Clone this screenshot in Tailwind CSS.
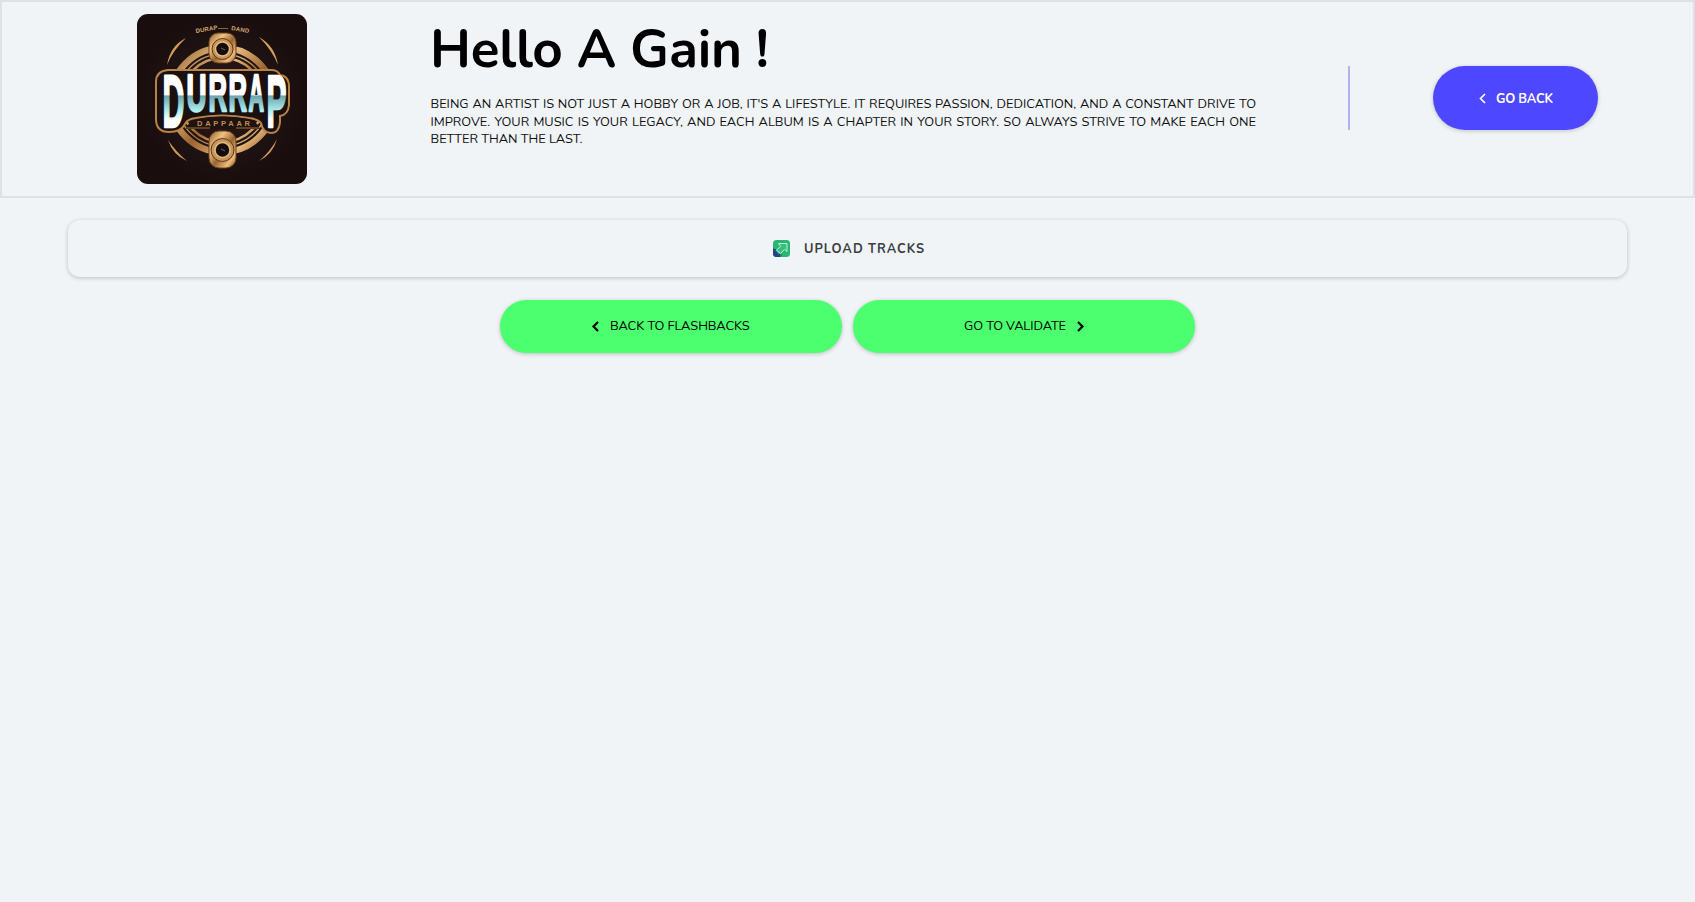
<!DOCTYPE html>
<html lang="en">
<head>
<meta charset="utf-8">
<title>Upload Tracks</title>
<script src="https://cdn.jsdelivr.net/npm/@tailwindcss/browser@4"></script>
</head>
<body class="min-h-screen bg-[#f0f4f7] font-[Nunito,Lato,sans-serif] text-black">
<header class="flex h-[198px] items-start border-2 border-[#dee2e6] pt-3 pl-[135px]">
  <svg class="size-[170px] shrink-0 rounded-[11px]" viewBox="0 0 170 170">
    <defs>
      <radialGradient id="bg"><stop offset="0" stop-color="#2a1b1b"/><stop offset="1" stop-color="#190d0e"/></radialGradient>
      <linearGradient id="gold" x1="0" y1="0" x2="1" y2="1"><stop offset="0" stop-color="#8a5a2c"/><stop offset=".3" stop-color="#f0c382"/><stop offset=".55" stop-color="#9a6430"/><stop offset=".8" stop-color="#eebd7c"/><stop offset="1" stop-color="#70421f"/></linearGradient>
      <linearGradient id="chrome" gradientUnits="userSpaceOnUse" x1="0" y1="60" x2="0" y2="114"><stop offset="0" stop-color="#fff"/><stop offset=".38" stop-color="#fff"/><stop offset=".41" stop-color="#6fa5ae"/><stop offset=".68" stop-color="#aeeeef"/><stop offset=".85" stop-color="#fff"/></linearGradient>
    </defs>
    <rect width="170" height="170" fill="url(#bg)"/>
    <g fill="none" stroke="url(#gold)">
      <circle cx="85.500" cy="86" r="52" stroke-width="6.500"/>
      <circle cx="85.500" cy="86" r="46" stroke-width="1.500"/>
      <circle cx="85.500" cy="86" r="42" stroke-width="2.500"/>
    </g>
    <path fill="#d59c5b" d="M49 24Q33 32 30 51Q36 36 49 24ZM122 23Q138 32 141 51Q135 36 122 23ZM31 126Q36 141 50 147Q39 138 31 126ZM140 125Q136 140 122 147Q133 138 140 125Z"/>
    <g>
      <rect x="72" y="19" width="27" height="30" rx="9" fill="url(#gold)" stroke="#6b3f1d"/>
      <circle cx="85.500" cy="35" r="10.500" fill="#c89558" stroke="#5c351a"/><circle cx="85.500" cy="35" r="7" fill="#150d0d" stroke="#e5bb80" stroke-width="1.500"/>
      <path d="M84 34L88 36" stroke="#80654c"/>
      <rect x="72" y="117" width="27" height="37" rx="10" fill="url(#gold)" stroke="#6b3f1d"/>
      <circle cx="85.500" cy="136" r="11.500" fill="#c89558" stroke="#5c351a"/><circle cx="85.500" cy="136" r="7.500" fill="#150d0d" stroke="#e5bb80" stroke-width="1.500"/>
      <path d="M84 135L88 137" stroke="#80654c"/>
    </g>
    <path d="M31 56H134Q141 56 143 61Q152 62 152 73V91Q151 101 143 102V108Q142 119 134 119Q126 119 124 109Q121 105 112 104Q85 99 59 104Q50 105 48 110Q44 118 32 118Q19 118 19 105V68Q19 57 31 56Z" fill="#1b1010" stroke="#b98247" stroke-width="2"/>
    <path d="M49 115Q52 107 60 105Q85 100 112 105Q120 107 123 115Z" fill="#1f1311"/>
    <g font-family="Liberation Sans" font-weight="700" fill="url(#chrome)" stroke="url(#chrome)" stroke-width="2.500" stroke-linejoin="round">
      <text x="25.500" y="112.500" font-size="74" textLength="22" lengthAdjust="spacingAndGlyphs">D</text>
      <text x="49.500" y="96.500" font-size="51" textLength="20" lengthAdjust="spacingAndGlyphs">U</text>
      <text x="71.500" y="96.500" font-size="51" textLength="18.500" lengthAdjust="spacingAndGlyphs">R</text>
      <text x="91.500" y="96.500" font-size="51" textLength="18.500" lengthAdjust="spacingAndGlyphs">R</text>
      <text x="111.500" y="96.500" font-size="51" textLength="15.500" lengthAdjust="spacingAndGlyphs">A</text>
      <text x="129.500" y="112.500" font-size="74" textLength="20" lengthAdjust="spacingAndGlyphs">P</text>
    </g>
    <path d="M50 114H73M99 114H122" stroke="#a66f39"/>
    <text x="60" y="112" textLength="53" font-family="Liberation Sans" font-weight="700" font-size="7.500" fill="#c58b4e">DAPPAAR</text>
    <text transform="translate(59 19) rotate(-10)" textLength="22" font-family="Liberation Sans" font-weight="700" font-size="6" fill="#d7aa72">DURAP</text>
    <path d="M81 14.500H91" stroke="#8a623a"/>
    <text transform="translate(94 16) rotate(10)" textLength="18" font-family="Liberation Sans" font-weight="700" font-size="6" fill="#d7aa72">DAND</text>
  </svg>
  <div class="ml-[122px] w-[827px] shrink-0">
    <h1 class="h-[83px]"><svg class="h-[83px] w-[400px] overflow-visible" viewBox="429 14 400 83" fill="currentColor" font-size="53" font-weight="700"><text x="430" y="66.500" textLength="339" xml:space="preserve">Hello A Gain !</text></svg></h1>
    <p class="-mt-[0.700px] pl-[1.500px] text-justify text-[12.800px] leading-[17.280px] text-[#111]">BEING AN ARTIST IS NOT JUST A HOBBY OR A JOB, IT'S A LIFESTYLE. IT REQUIRES PASSION, DEDICATION, AND A CONSTANT DRIVE TO IMPROVE. YOUR MUSIC IS YOUR LEGACY, AND EACH ALBUM IS A CHAPTER IN YOUR STORY. SO ALWAYS STRIVE TO MAKE EACH ONE BETTER THAN THE LAST.</p>
  </div>
  <div class="mt-[52px] ml-[92px] h-16 w-[2px] shrink-0 bg-[#b3b0ef]"></div>
  <button class="mt-[52.300px] ml-[82.700px] flex h-16 w-[165px] shrink-0 items-center rounded-full bg-[#4d47ff] pl-[46px] text-[12.800px] font-bold text-white shadow-[0_1px_4px_rgba(0,0,0,0.2)]">
    <svg class="mt-px h-[11px] w-[7px]" viewBox="0 0 7 11" fill="none" stroke="currentColor" stroke-width="1.700"><path d="M6 1L1.500 5.500L6 10"/></svg>
    <svg class="mt-px ml-[10px] h-5 w-[60px]" viewBox="0 0 60 20" fill="currentColor"><text x="0" y="14" textLength="57">GO BACK</text></svg>
  </button>
</header>
<main>
  <section class="mx-[68px] mt-[22px] flex h-[57px] items-center rounded-xl pl-[705px] shadow-[0_1px_4px_rgba(0,0,0,0.22)]">
    <svg class="size-[17px]" viewBox="0 0 17 17"><rect width="17" height="17" rx="3.500" fill="#29b574"/><path d="M0 8L8 17H3.500Q0 17 0 13.500Z" fill="#244584"/><path d="M5.500 3.500H14V11.500L11.500 9.500L7.500 13.500L3.500 10L7.500 6.500Z" fill="#39be7e" stroke="#b9efd5"/><path d="M2 9Q2 15 9 15" fill="none" stroke="#244584" stroke-width="2" stroke-dasharray="1.500 1"/></svg>
    <svg class="-mt-px ml-[14px] h-5 w-[125px]" viewBox="0 0 125 20" font-size="12.800" font-weight="700" fill="#3a3e44"><text x="0" y="14.500" textLength="120">UPLOAD TRACKS</text></svg>
  </section>
  <div class="mt-[23px] flex justify-center gap-[11px] text-[12.800px]">
    <button class="flex h-[53px] w-[342px] items-center rounded-full bg-[#4bff6e] pl-[92px] shadow-[0_1px_4px_rgba(0,0,0,0.22)]">
      <svg class="h-[11px] w-[7px]" viewBox="0 0 7 11" fill="none" stroke="currentColor" stroke-width="2.200"><path d="M6 1L1.500 5.500L6 10"/></svg>
      <svg class="-mt-[3px] ml-[11px] h-5 w-[142px]" viewBox="0 0 142 20"><text x="0" y="14.500" textLength="139.500">BACK TO FLASHBACKS</text></svg>
    </button>
    <button class="flex h-[53px] w-[342px] items-center rounded-full bg-[#4bff6e] pl-[111px] shadow-[0_1px_4px_rgba(0,0,0,0.22)]">
      <svg class="-mt-[3px] h-5 w-[103px]" viewBox="0 0 103 20"><text x="0" y="14.500" textLength="102">GO TO VALIDATE</text></svg>
      <svg class="ml-[10px] h-[11px] w-[7px]" viewBox="0 0 7 11" fill="none" stroke="currentColor" stroke-width="2.200"><path d="M1 1L5.500 5.500L1 10"/></svg>
    </button>
  </div>
</main>
</body>
</html>
